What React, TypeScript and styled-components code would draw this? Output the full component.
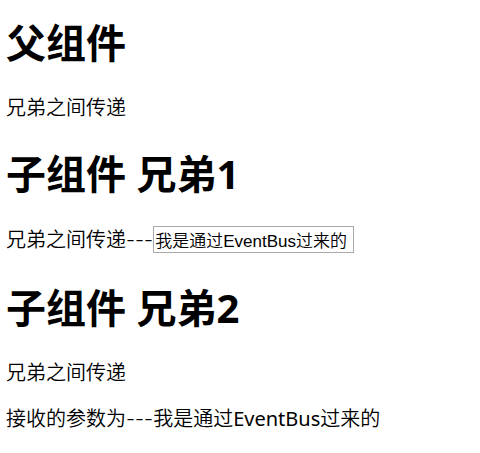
import React, { useState } from "react";
import styled, { createGlobalStyle } from "styled-components";

const GlobalStyle = createGlobalStyle`
  body {
    margin: 0;
    background: #fff;
    color: #000;
    font-family: "Noto Sans", "Noto Sans CJK SC DemiLight", "Noto Sans CJK SC", sans-serif;
    font-size: 20px;
    line-height: 26px;
  }
`;

const Page = styled.main`
  padding: 16px 6px;
`;

const Section = styled.section`
  margin-bottom: 26px;
`;

const Title = styled.h1`
  margin: 0 0 25px;
  font-family: "Noto Sans", "Noto Sans CJK SC", sans-serif;
  font-size: 40px;
  font-weight: 700;
  line-height: 54px;
`;

const Paragraph = styled.p`
  margin: 0 0 20px;

  &:last-child {
    margin-bottom: 0;
  }
`;

const Field = styled.label`
  display: flex;
  align-items: center;
  padding-bottom: 2px;
`;

const Dashes = styled.span`
  font-family: Inter, sans-serif;
  font-weight: 300;
`;

const TextBox = styled.input`
  box-sizing: border-box;
  width: 201px;
  height: 27px;
  padding: 1px;
  border: 1px solid #a9a9a9;
  background: #fff;
  color: #000;
  font-family: "Liberation Sans", "Noto Sans CJK SC DemiLight", "Noto Sans CJK SC", sans-serif;
  font-size: 17px;
`;

export default function App() {
  const [message, setMessage] = useState("我是通过EventBus过来的");

  return (
    <>
      <GlobalStyle />
      <Page lang="zh-CN">
        <Section>
          <Title>父组件</Title>
          <Paragraph>兄弟之间传递</Paragraph>
        </Section>
        <Section>
          <Title>子组件 兄弟1</Title>
          <Field>
            兄弟之间传递<Dashes>---</Dashes>
            <TextBox type="text" value={message} onChange={(e) => setMessage(e.target.value)} />
          </Field>
        </Section>
        <Section>
          <Title>子组件 兄弟2</Title>
          <Paragraph>兄弟之间传递</Paragraph>
          <Paragraph>
            接收的参数为<Dashes>---</Dashes>
            {message}
          </Paragraph>
        </Section>
      </Page>
    </>
  );
}
